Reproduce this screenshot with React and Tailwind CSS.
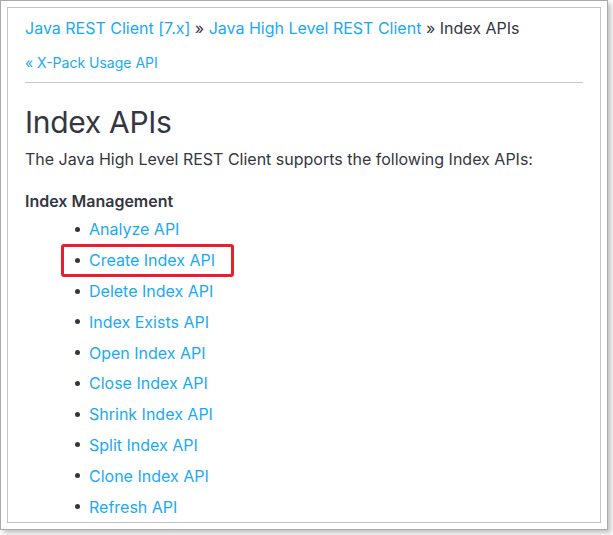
import React from 'react';

const items = [
    'Analyze API',
    'Create Index API',
    'Delete Index API',
    'Index Exists API',
    'Open Index API',
    'Close Index API',
    'Shrink Index API',
    'Split Index API',
    'Clone Index API',
    'Refresh API',
];

export default function App() {
    return (
        <div className="w-[613px] h-[535px] bg-white font-['Inter',sans-serif]">
            <div className="w-[608px] h-[530px] border border-[#a9a9a9] bg-white p-[6px] shadow-[3px_3px_5px_rgba(0,0,0,0.25)]">
                <div className="h-full border border-[#c3c3c3] px-[17px] overflow-hidden">
                    <div className="pt-[9px] text-[16px] leading-[22px] text-[#343741]">
                        <a className="text-[#1ba9f5]">Java REST Client [7.x]</a>
                        <span> » </span>
                        <a className="text-[#1ba9f5]">Java High Level REST Client</a>
                        <span> » Index APIs</span>
                    </div>
                    <div className="mt-[15px] pb-[10px] text-[14px] leading-[18px] text-[#1ba9f5] border-b border-[#c8c8c8]">
                        « X-Pack Usage API
                    </div>
                    <h1 className="mt-[20px] text-[30px] leading-[38px] text-[#343741] font-normal tracking-[-0.3px]">
                        Index APIs
                    </h1>
                    <p className="mt-[7px] text-[16px] leading-[22px] text-[#343741]">
                        The Java High Level REST Client supports the following Index APIs:
                    </p>
                    <div className="mt-[20px] text-[16px] leading-[22px] font-semibold text-[#343741]">
                        Index Management
                    </div>
                    <ul className="mt-[2px] ml-[37px]">
                        {items.map((item, i) => (
                            <li
                                key={item}
                                className={
                                    i === 1
                                        ? 'flex items-center h-[33px] -my-[1.1px] -ml-[1px] w-[173px] pl-[11px] border-[3px] border-[#e8202b] rounded-[3px]'
                                        : 'flex items-center h-[30.8px] pl-[13px]'
                                }
                            >
                                <span className="w-[5px] h-[5px] rounded-full bg-[#343741] mr-[9px]"></span>
                                <span className="text-[16px] text-[#1ba9f5]">{item}</span>
                            </li>
                        ))}
                    </ul>
                </div>
            </div>
        </div>
    );
}
